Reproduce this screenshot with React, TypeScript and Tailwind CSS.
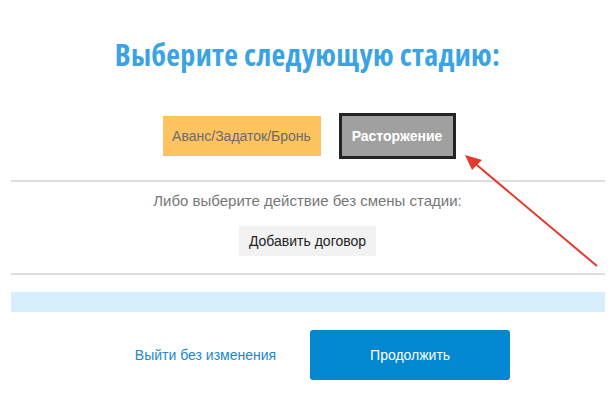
export default function App() {
  return (
    <div className="relative w-[615px] h-[409px] bg-white overflow-hidden font-['Liberation_Sans',Arial,sans-serif]">
      {/* Title */}
      <h1 className="pt-[35px] text-center text-[30px] leading-[40px] font-bold text-[#3aa3e3] font-['Open_Sans',sans-serif] font-stretch-condensed tracking-[0.3px]">
        Выберите следующую стадию:
      </h1>

      {/* Stages */}
      <div className="mt-[38px] flex items-center justify-center gap-[18px] pl-[3px]">
        <button className="w-[158px] h-[40px] bg-[#fdc35f] text-[#6b6b6b] text-[14px]">
          Аванс/Задаток/Бронь
        </button>
        <button className="w-[117px] h-[46px] bg-[#a0a0a0] border-[3px] border-[#232323] text-white text-[14px] font-bold">
          Расторжение
        </button>
      </div>

      <div className="ml-[11px] mr-[10px] mt-[21px] border-t-2 border-[#dedede]" />

      <p className="mt-[9px] text-center text-[15px] text-[#777] leading-[19px]">
        Либо выберите действие без смены стадии:
      </p>
      <div className="mt-[16px] flex justify-center">
        <button className="w-[137px] h-[30px] bg-[#f2f2f2] text-[14px] text-[#222]">
          Добавить договор
        </button>
      </div>

      <div className="ml-[11px] mr-[10px] mt-[17px] border-t-2 border-[#dedede]" />

      <div className="ml-[11px] mr-[10px] mt-[17px] h-[20px] bg-[#d5f0fc]" />

      {/* Footer */}
      <div className="mt-[18px] flex items-center justify-center pl-[30px]">
        <a className="mr-[34px] text-[14px] text-[#1a87d0] cursor-pointer">Выйти без изменения</a>
        <button className="w-[200px] h-[50px] rounded-[3px] bg-[#0288d1] text-white text-[14px]">
          Продолжить
        </button>
      </div>

      {/* Annotation arrow */}
      <svg className="absolute left-0 top-0 pointer-events-none" width="615" height="409">
        <line x1="597" y1="266" x2="472" y2="161" stroke="#e5392c" strokeWidth="2" />
        <polygon points="465,155 482,160 472,170" fill="#e5392c" />
      </svg>
    </div>
  )
}
